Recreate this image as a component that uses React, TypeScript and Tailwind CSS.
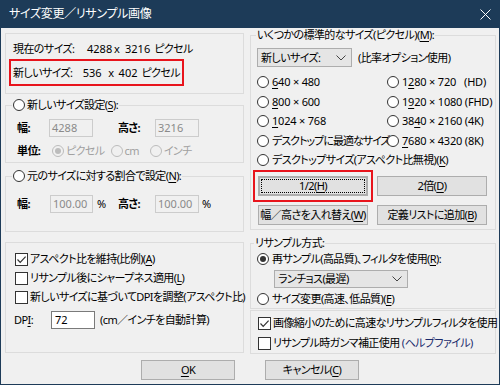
import React from "react";

function U({ children }: { children: React.ReactNode }) {
  return <span className="underline underline-offset-[2px]">{children}</span>;
}

function Radio({ checked = false, disabled = false }: { checked?: boolean; disabled?: boolean }) {
  return (
    <span
      className={
        disabled
          ? "flex h-[12px] w-[12px] shrink-0 items-center justify-center rounded-full border border-[#bcbcbc] bg-[#f0f0f0]"
          : "flex h-[12px] w-[12px] shrink-0 items-center justify-center rounded-full border border-[#333333] bg-white"
      }
    >
      {checked && (
        <span className={disabled ? "h-[6px] w-[6px] rounded-full bg-[#bcbcbc]" : "h-[6px] w-[6px] rounded-full bg-[#333333]"} />
      )}
    </span>
  );
}

function Check({ checked = false }: { checked?: boolean }) {
  return (
    <span className="flex h-[13px] w-[13px] shrink-0 items-center justify-center border border-[#333333] bg-white">
      {checked && (
        <svg width="11" height="11" viewBox="0 0 11 11">
          <path d="M1.5 5.5 L4.2 8.3 L9.6 2.6" fill="none" stroke="#333333" strokeWidth="1.2" />
        </svg>
      )}
    </span>
  );
}

function Chevron() {
  return (
    <svg width="10" height="6" viewBox="0 0 10 6">
      <path d="M0.5 0.5 L5 5 L9.5 0.5" fill="none" stroke="#444444" strokeWidth="1" />
    </svg>
  );
}

function Btn({ children, className = "" }: { children: React.ReactNode; className?: string }) {
  return (
    <div className={"flex items-center justify-center whitespace-nowrap border border-[#adadad] bg-[#e1e1e1] " + className}>{children}</div>
  );
}

export default function App() {
  return (
    <div className="flex h-[385px] w-[500px] flex-col overflow-hidden whitespace-nowrap border-x border-b border-[#1d3b58] bg-[#f0f0f0] font-['Noto_Sans','Noto_Sans_CJK_JP',sans-serif] text-[11px] leading-[16px] tracking-[-0.6px] text-black [font-feature-settings:'palt']">
      {/* Title bar */}
      <div className="flex h-[28px] shrink-0 items-center justify-between bg-[#1d3b58] pl-[8px] pr-[8px] text-white">
        <span className="text-[12px] tracking-[-0.3px]">サイズ変更／リサンプル画像</span>
        <svg width="11" height="11" viewBox="0 0 11 11">
          <path d="M0.5 0.5 L10.5 10.5 M10.5 0.5 L0.5 10.5" stroke="#ffffff" strokeWidth="1" />
        </svg>
      </div>

      <div className="flex gap-[6px] pl-[4px]">
        {/* Left column */}
        <div className="flex w-[239px] flex-col">
          {/* Box 1 */}
          <div className="mt-[5px] h-[61px] border border-[#dcdcdc] pl-[3px] pt-[7px]">
            <div className="flex h-[16px] items-center pl-[4px]">
              <span className="w-[74px]">現在のサイズ:</span>
              <span className="w-[27px] tracking-normal">4288</span>
              <span className="w-[11px]">x</span>
              <span className="tracking-normal">3216</span>
              <span className="ml-[4px]">ピクセル</span>
            </div>
            <div className="mt-[2px] flex h-[27px] w-[175px] items-center border-2 border-[#e8141c] px-[2px]">
              <span className="w-[74px]">新しいサイズ:</span>
              <span className="w-[27px] tracking-normal">536</span>
              <span className="w-[11px]">x</span>
              <span className="tracking-normal">402</span>
              <span className="ml-[4px]">ピクセル</span>
            </div>
          </div>

          {/* Box 2 */}
          <fieldset className="mt-[4px] border border-[#dcdcdc] pb-[3px]">
            <legend className="ml-[6px] px-[1px]">
              <span className="flex h-[14px] items-center gap-[2px]">
                <Radio />
                <span>
                  新しいサイズ設定(<U>S</U>):
                </span>
              </span>
            </legend>
            <div className="mt-[7px] flex h-[18px] items-center pl-[11px]">
              <span className="w-[32px] font-bold">幅:</span>
              <div className="flex h-[18px] w-[44px] items-center border border-[#cccccc] pl-[2px] tracking-normal text-[#8a8a8a]">4288</div>
              <span className="ml-[25px] w-[37px] font-bold">高さ:</span>
              <div className="flex h-[18px] w-[44px] items-center border border-[#cccccc] pl-[2px] tracking-normal text-[#8a8a8a]">3216</div>
            </div>
            <div className="mt-[6px] flex h-[16px] items-center pl-[11px]">
              <span className="w-[35px] font-bold">単位:</span>
              <Radio checked disabled />
              <span className="ml-[2px] text-[#a0a0a0]">ピクセル</span>
              <span className="ml-[6px]">
                <Radio disabled />
              </span>
              <span className="ml-[2px] text-[#a0a0a0]">cm</span>
              <span className="ml-[11px]">
                <Radio disabled />
              </span>
              <span className="ml-[2px] text-[#a0a0a0]">インチ</span>
            </div>
          </fieldset>

          {/* Box 3 */}
          <fieldset className="mt-[6px] border border-[#dcdcdc] pb-[18px]">
            <legend className="ml-[6px] px-[1px]">
              <span className="flex h-[14px] items-center gap-[2px]">
                <Radio />
                <span>
                  元のサイズに対する割合で設定(<U>N</U>):
                </span>
              </span>
            </legend>
            <div className="mt-[12px] flex h-[18px] items-center pl-[11px]">
              <span className="w-[33px] font-bold">幅:</span>
              <div className="flex h-[18px] w-[43px] items-center border border-[#cccccc] pl-[2px] tracking-normal text-[#8a8a8a]">100.00</div>
              <span className="ml-[4px] w-[21px]">%</span>
              <span className="w-[37px] font-bold">高さ:</span>
              <div className="flex h-[18px] w-[44px] items-center border border-[#cccccc] pl-[2px] tracking-normal text-[#8a8a8a]">100.00</div>
              <span className="ml-[3px]">%</span>
            </div>
          </fieldset>

          {/* Box 4 */}
          <div className="mt-[10px] flex flex-col gap-[3px] border border-[#dcdcdc] pb-[23px] pl-[9px] pt-[8px]">
            <div className="flex h-[16px] items-center gap-[2px]">
              <Check checked />
              <span>
                アスペクト比を維持(比例)(<U>A</U>)
              </span>
            </div>
            <div className="flex h-[16px] items-center gap-[2px]">
              <Check />
              <span>
                リサンプル後にシャープネス適用(<U>L</U>)
              </span>
            </div>
            <div className="flex h-[16px] items-center gap-[2px]">
              <Check />
              <span>新しいサイズに基づいてDPIを調整(アスペクト比)</span>
            </div>
            <div className="mt-[3px] flex h-[18px] items-center -ml-[1px]">
              <span className="w-[37px]">
                DP<U>I</U>:
              </span>
              <div className="flex h-[18px] w-[44px] items-center border border-[#7a7a7a] bg-white pl-[3px] tracking-normal">72</div>
              <span className="ml-[5px]">(cm／インチを自動計算)</span>
            </div>
          </div>
        </div>

        {/* Right column */}
        <div className="flex w-[246px] flex-col">
          {/* Box A */}
          <fieldset className="border border-[#dcdcdc] pb-[4px]">
            <legend className="ml-[5px] px-[1px]">
              <span className="flex h-[14px] items-center">
                いくつかの標準的なサイズ(ピクセル)(<U>M</U>):
              </span>
            </legend>
            <div className="mt-[6px] flex items-center pl-[6px]">
              <div className="flex h-[19px] w-[95px] items-center justify-between border border-[#adadad] bg-[#e5e5e5] pl-[3px] pr-[5px]">
                <span>新しいサイズ:</span>
                <Chevron />
              </div>
              <span className="ml-[6px]">(比率オプション使用)</span>
            </div>
            <div className="mt-[7px] grid grid-cols-[130px_1fr] gap-y-[3.5px] pl-[6px]">
              <div className="flex h-[16px] items-center gap-[3px]">
                <Radio />
                <span className="tracking-[-0.2px]">
                  <U>6</U>40 × 480
                </span>
              </div>
              <div className="flex h-[16px] items-center gap-[3px]">
                <Radio />
                <span className="whitespace-pre tracking-[-0.2px]">
                  1<U>2</U>80 × 720   (HD)
                </span>
              </div>
              <div className="flex h-[16px] items-center gap-[3px]">
                <Radio />
                <span className="tracking-[-0.2px]">
                  <U>8</U>00 × 600
                </span>
              </div>
              <div className="flex h-[16px] items-center gap-[3px]">
                <Radio />
                <span className="tracking-[-0.2px]">
                  1<U>9</U>20 × 1080 (FHD)
                </span>
              </div>
              <div className="flex h-[16px] items-center gap-[3px]">
                <Radio />
                <span className="tracking-[-0.2px]">
                  <U>1</U>024 × 768
                </span>
              </div>
              <div className="flex h-[16px] items-center gap-[3px]">
                <Radio />
                <span className="tracking-[-0.2px]">
                  38<U>4</U>0 × 2160 (4K)
                </span>
              </div>
              <div className="flex h-[16px] items-center gap-[3px]">
                <Radio />
                <span className="tracking-[-1px]">デスクトップに最適なサイズ</span>
              </div>
              <div className="flex h-[16px] items-center gap-[3px]">
                <Radio />
                <span className="tracking-[-0.2px]">
                  <U>7</U>680 × 4320 (8K)
                </span>
              </div>
              <div className="col-span-2 flex h-[16px] items-center gap-[3px]">
                <Radio />
                <span>
                  デスクトップサイズ(アスペクト比無視)(<U>K</U>)
                </span>
              </div>
            </div>
            <div className="mt-[8px] flex gap-[9px] pl-[7px]">
              <div className="relative">
                <Btn className="h-[20px] w-[110px] border-2 border-[#0078d7] [outline:1px_dotted_#000] [outline-offset:-4px]">
                  1/2(<U>H</U>)
                </Btn>
                <span className="pointer-events-none absolute -inset-x-[5px] -inset-y-[6px] border-2 border-[#e8141c]" />
              </div>
              <Btn className="h-[20px] w-[110px]">
                2倍(<U>D</U>)
              </Btn>
            </div>
            <div className="mt-[9px] flex gap-[9px] pl-[7px]">
              <Btn className="h-[20px] w-[110px]">
                幅／高さを入れ替え(<U>W</U>)
              </Btn>
              <Btn className="h-[20px] w-[110px]">
                定義リストに追加(<U>B</U>)
              </Btn>
            </div>
          </fieldset>

          {/* Box B */}
          <fieldset className="mt-[6px] border border-[#dcdcdc] pb-[1px]">
            <legend className="ml-[3px] px-[1px]">
              <span className="flex h-[14px] items-center">リサンプル方式:</span>
            </legend>
            <div className="mt-[1px] flex h-[16px] items-center gap-[3px] pl-[6px]">
              <Radio checked />
              <span>
                再サンプル(高品質)、フィルタを使用(<U>R</U>):
              </span>
            </div>
            <div className="ml-[23px] mt-[3px] flex h-[18px] w-[134px] items-center justify-between border border-[#adadad] bg-[#e5e5e5] pl-[3px] pr-[5px]">
              <span>ランチョス(最遅)</span>
              <Chevron />
            </div>
            <div className="mt-[3px] flex h-[16px] items-center gap-[3px] pl-[6px]">
              <Radio />
              <span>
                サイズ変更(高速、低品質)(<U>E</U>)
              </span>
            </div>
          </fieldset>

          {/* Box C */}
          <div className="mt-[1px] flex flex-col gap-[4px] border border-[#dcdcdc] pb-[2px] pl-[7px] pt-[4px]">
            <div className="flex h-[16px] items-center gap-[2px]">
              <Check checked />
              <span>画像縮小のために高速なリサンプルフィルタを使用</span>
            </div>
            <div className="flex h-[16px] items-center gap-[2px]">
              <Check />
              <span>
                リサンプル時ガンマ補正使用 <span className="text-[#1a2a6c]">(ヘルプファイル)</span>
              </span>
            </div>
          </div>
        </div>
      </div>

      {/* Footer */}
      <div className="mt-[6px] flex justify-center gap-[30px]">
        <Btn className="h-[20px] w-[94px]">
          <U>O</U>K
        </Btn>
        <Btn className="h-[20px] w-[94px]">
          キャンセル(<U>C</U>)
        </Btn>
      </div>
    </div>
  );
}
